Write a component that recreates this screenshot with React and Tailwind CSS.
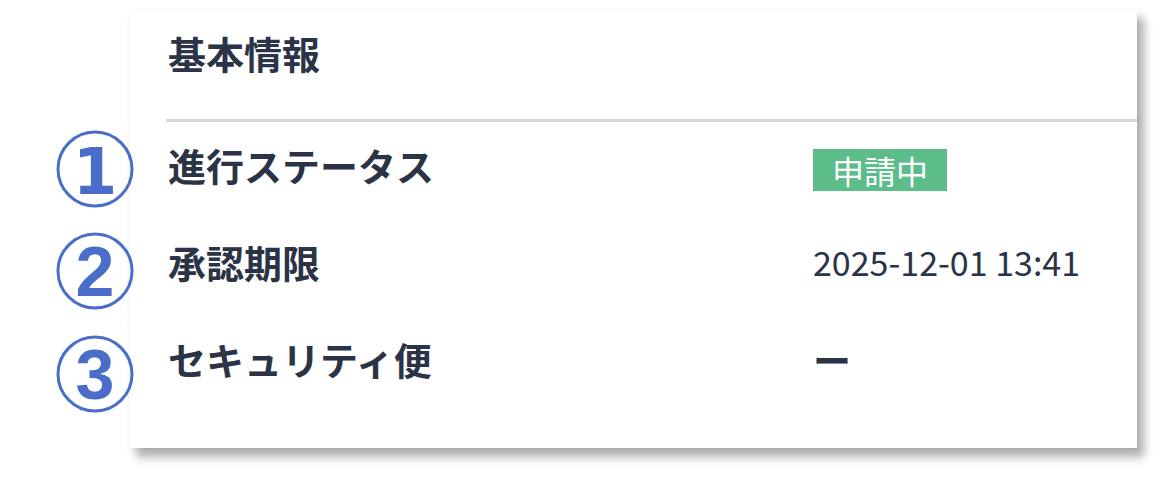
const rows = [
  { label: '進行ステータス', kind: 'badge', value: '申請中' },
  { label: '承認期限', kind: 'text', value: '2025-12-01 13:41' },
  { label: 'セキュリティ便', kind: 'dash', value: 'ー' },
]

const markers = [
  { n: '1', top: 'top-[130px]', family: '"DejaVu Sans", sans-serif', size: 64 },
  { n: '2', top: 'top-[232px]', family: '"Liberation Sans", Arial, sans-serif', size: 70 },
  { n: '3', top: 'top-[335px]', family: '"Liberation Sans", Arial, sans-serif', size: 70 },
]

const font = { fontFamily: '"Noto Sans CJK JP", "Noto Sans", sans-serif' }

const Marker = ({ n, top, family, size }) => (
  <svg className={`absolute left-[56px] ${top} z-10`} width="78" height="78" viewBox="0 0 78 78">
    <circle cx="39" cy="39" r="37" fill="none" stroke="#4a6dca" strokeWidth="3" />
    <text
      x="39"
      y="64"
      textAnchor="middle"
      fill="#4a6dca"
      fontSize={size}
      fontWeight="700"
      fontFamily={family}
    >
      {n}
    </text>
  </svg>
)

export default function App() {
  return (
    <div className="relative w-[1168px] h-[481px] bg-white text-[#2b3446]" style={font}>
      {/* annotation markers */}
      {markers.map((m) => (
        <Marker key={m.n} {...m} />
      ))}

      <div className="ml-[129px] pt-[9px]">
        <div className="w-[1008px] h-[439px] bg-white shadow-[7px_9px_9px_rgba(0,0,0,0.32),0_0_2px_rgba(0,0,0,0.08)]">
          {/* Header */}
          <div className="pl-[39px] pt-[20px] h-[110px]">
            <h3 className="text-[38px] leading-[48px] font-bold">基本情報</h3>
          </div>
          <div className="ml-[37px] h-[3px] bg-[#d6d6d6]" />

          {/* Rows */}
          <div className="pl-[39px] pt-[19px] flex flex-col gap-[49px]">
            {rows.map((row) => (
              <div key={row.label} className="flex items-center h-[48px]">
                <div className="w-[645px] text-[38px] leading-[48px] font-bold">{row.label}</div>
                {row.kind === 'badge' && (
                  <span className="inline-flex items-center mt-[10px] h-[42px] px-[19px] bg-[#5cbd8b] text-white text-[32px] leading-none">
                    {row.value}
                  </span>
                )}
                {row.kind === 'text' && (
                  <span className="text-[34px] leading-[48px]">{row.value}</span>
                )}
                {row.kind === 'dash' && (
                  <span className="text-[38px] leading-[48px] font-bold">{row.value}</span>
                )}
              </div>
            ))}
          </div>
        </div>
      </div>
    </div>
  )
}
